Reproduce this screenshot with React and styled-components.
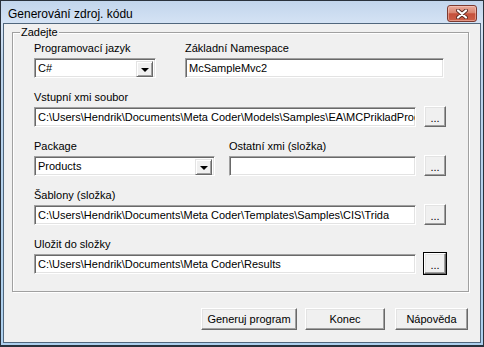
import React from "react";
import styled, { createGlobalStyle } from "styled-components";

const Global = createGlobalStyle`
  html, body {
    margin: 0;
    padding: 0;
    background: #fff;
  }
  body {
    font-family: "Liberation Sans", Arial, sans-serif;
    font-size: 11px;
    color: #000;
  }
  * {
    box-sizing: border-box;
  }
`;

const Window = styled.div`
  width: 484px;
  height: 347px;
  display: flex;
  flex-direction: column;
  background: linear-gradient(#c2d5ec, #d6e4f5 24px, #bcd4ec 60px, #add0ee);
  border: 1px solid #2a323c;
  border-bottom-width: 2px;
  padding: 0 2px 2px 2px;
`;

const TitleBar = styled.div`
  height: 22px;
  display: flex;
  align-items: flex-start;
  justify-content: space-between;
  padding: 0 4px 0 5px;
`;

const Title = styled.div`
  font-size: 12px;
  line-height: 14px;
  padding-top: 6px;
  color: #000;
`;

const CloseButton = styled.div`
  width: 30px;
  height: 17px;
  margin-top: 4px;
  border: 1px solid #7c3a30;
  border-radius: 3px;
  background: linear-gradient(#eaaa9c, #d98570 45%, #c5503b 52%, #cc6048);
  box-shadow: inset 0 0 0 1px rgba(255, 220, 210, 0.45);
  display: flex;
  align-items: center;
  justify-content: center;
`;

const Client = styled.div`
  flex: 1;
  background: #f0f0f0;
  border: 1px solid #51677d;
  display: flex;
  flex-direction: column;
`;

const Group = styled.div`
  position: relative;
  height: 260px;
  margin: 8px 11px 0 8px;
  border: 1px solid #a0a0a0;
  box-shadow: 1px 1px 0 #fff, inset 1px 1px 0 #fff;
  padding: 9px 0 0 21px;
  display: flex;
  flex-direction: column;
  gap: 13px;
`;

const Legend = styled.span`
  position: absolute;
  top: -7px;
  left: 7px;
  padding: 0 1px;
  line-height: 13px;
  background: #f0f0f0;
`;

const Row = styled.div`
  display: flex;
  align-items: flex-end;
`;

const Field = styled.div`
  display: flex;
  flex-direction: column;
  margin-left: ${(p) => p.$gap || 0}px;
`;

const Label = styled.div`
  height: 13px;
  line-height: 13px;
  margin-bottom: 3px;
  white-space: nowrap;
`;

const TextBox = styled.div`
  width: ${(p) => p.$w}px;
  height: 20px;
  background: #fff;
  border: 1px solid;
  border-color: #a0a0a0 #fff #fff #a0a0a0;
  box-shadow: inset 1px 1px 0 #696969, inset -1px -1px 0 #e3e3e3;
  padding: 0 2px 0 3px;
  line-height: 18px;
  white-space: nowrap;
  overflow: hidden;
`;

const Combo = styled(TextBox)`
  display: flex;
  justify-content: space-between;
  padding: 2px 2px 2px 3px;
  line-height: 14px;
`;

const DropButton = styled.div`
  width: 17px;
  height: 16px;
  flex: none;
  background: #f0f0f0;
  border: 1px solid;
  border-color: #e3e3e3 #696969 #696969 #e3e3e3;
  box-shadow: inset 1px 1px 0 #fff, inset -1px -1px 0 #a0a0a0;
  display: flex;
  align-items: center;
  justify-content: center;
`;

const Arrow = styled.span`
  width: 0;
  height: 0;
  border-left: 4px solid transparent;
  border-right: 4px solid transparent;
  border-top: 4px solid #000;
  margin-top: 1px;
`;

const Button = styled.div`
  width: ${(p) => p.$w}px;
  height: ${(p) => p.$h || 22}px;
  margin-left: ${(p) => p.$ml || 0}px;
  flex: none;
  background: #f0f0f0;
  border: 1px solid;
  border-color: #fff #696969 #696969 #fff;
  box-shadow: ${(p) =>
    p.$focus
      ? "0 0 0 1px #000, inset -1px -1px 0 #a0a0a0, inset 1px 1px 0 #e3e3e3"
      : "inset -1px -1px 0 #a0a0a0, inset 1px 1px 0 #e3e3e3"};
  display: flex;
  align-items: center;
  justify-content: center;
  line-height: 13px;
  white-space: nowrap;
`;

const Dots = styled.span`
  padding-top: 3px;
`;

const Footer = styled.div`
  display: flex;
  justify-content: flex-end;
  margin-top: 16px;
  padding-right: 12px;
`;

function CloseIcon() {
  return (
    <svg width="12" height="10" viewBox="0 0 12 10">
      <path d="M2 1.5 L10 8.5 M10 1.5 L2 8.5" stroke="#5a2a24" strokeWidth="4" strokeLinecap="round" />
      <path d="M2 1.5 L10 8.5 M10 1.5 L2 8.5" stroke="#fff" strokeWidth="2.2" strokeLinecap="round" />
    </svg>
  );
}

function Browse({ focus }) {
  return (
    <Button $w={22} $h={21} $ml={8} $focus={focus}>
      <Dots>...</Dots>
    </Button>
  );
}

function PathRow({ label, value, focus }) {
  return (
    <Row>
      <Field>
        <Label>{label}</Label>
        <TextBox $w={382}>{value}</TextBox>
      </Field>
      <Browse focus={focus} />
    </Row>
  );
}

export default function App() {
  return (
    <>
      <Global />
      <Window>
        <TitleBar>
          <Title>Generování zdroj. kódu</Title>
          <CloseButton>
            <CloseIcon />
          </CloseButton>
        </TitleBar>
        <Client>
          <Group>
            <Legend>Zadejte</Legend>
            <Row>
              <Field>
                <Label>Programovací jazyk</Label>
                <Combo $w={122}>
                  C#
                  <DropButton>
                    <Arrow />
                  </DropButton>
                </Combo>
              </Field>
              <Field $gap={29}>
                <Label>Základní Namespace</Label>
                <TextBox $w={259}>McSampleMvc2</TextBox>
              </Field>
            </Row>
            <PathRow
              label="Vstupní xmi soubor"
              value="C:\Users\Hendrik\Documents\Meta Coder\Models\Samples\EA\MCPrikladProd"
            />
            <Row>
              <Field>
                <Label>Package</Label>
                <Combo $w={181}>
                  Products
                  <DropButton>
                    <Arrow />
                  </DropButton>
                </Combo>
              </Field>
              <Field $gap={14}>
                <Label>Ostatní xmi (složka)</Label>
                <TextBox $w={187}></TextBox>
              </Field>
              <Browse />
            </Row>
            <PathRow
              label="Šablony (složka)"
              value="C:\Users\Hendrik\Documents\Meta Coder\Templates\Samples\CIS\Trida"
            />
            <PathRow
              label="Uložit do složky"
              value="C:\Users\Hendrik\Documents\Meta Coder\Results"
              focus
            />
          </Group>
          <Footer>
            <Button $w={96}>Generuj program</Button>
            <Button $w={80} $ml={8}>Konec</Button>
            <Button $w={73} $ml={10}>Nápověda</Button>
          </Footer>
        </Client>
      </Window>
    </>
  );
}
